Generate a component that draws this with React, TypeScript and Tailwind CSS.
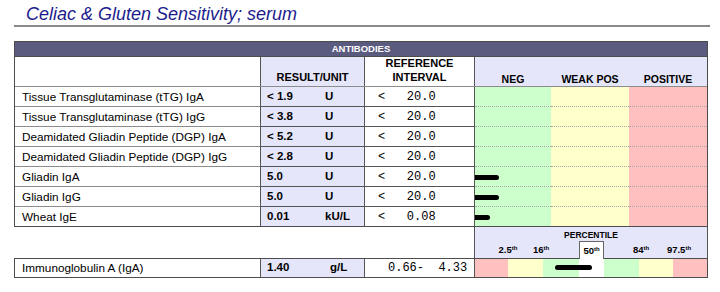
import React from "react";

type Row = { name: string; value: string; unit: string; ref: string; bar?: number };

const rows: Row[] = [
  { name: "Tissue Transglutaminase (tTG) IgA", value: "< 1.9", unit: "U", ref: "<   20.0" },
  { name: "Tissue Transglutaminase (tTG) IgG", value: "< 3.8", unit: "U", ref: "<   20.0" },
  { name: "Deamidated Gliadin Peptide (DGP) IgA", value: "< 5.2", unit: "U", ref: "<   20.0" },
  { name: "Deamidated Gliadin Peptide (DGP) IgG", value: "< 2.8", unit: "U", ref: "<   20.0" },
  { name: "Gliadin IgA", value: "5.0", unit: "U", ref: "<   20.0", bar: 24 },
  { name: "Gliadin IgG", value: "5.0", unit: "U", ref: "<   20.0", bar: 24 },
  { name: "Wheat IgE", value: "0.01", unit: "kU/L", ref: "<   0.08", bar: 15 },
];

function DataRow({ row, last }: { row: Row; last: boolean }) {
  const line = last ? "" : "border-b border-[#8c8c8c]";
  const dots = last ? "" : "border-b border-dotted border-[#a8a8a8]";
  return (
    <div className={"grid grid-cols-[245px_104px_110px_233px] " + (last ? "h-[19px]" : "h-[20px]")}>
      <div className={"flex items-center pl-[7px] text-[11.75px] " + line}>{row.name}</div>
      <div className={"flex items-center pl-[6px] border-l border-[#555] bg-[#e6e6fa] text-[11.5px] font-bold " + line}>
        <span className="w-[58px]">{row.value}</span>
        <span>{row.unit}</span>
      </div>
      <div className={"flex items-center pl-[13px] border-l border-[#555] font-['Liberation_Mono',monospace] text-[12px] whitespace-pre " + line}>
        {row.ref}
      </div>
      <div className="relative grid grid-cols-[76px_78px_78px] border-l border-[#555]">
        <div className={"bg-[#ccffcc] " + dots} />
        <div className={"bg-[#ffffcc] " + dots} />
        <div className={"bg-[#ffc0c0] " + dots} />
        {row.bar ? (
          <div
            className="absolute left-0 top-[8px] h-[5px] bg-black rounded-r-full rounded-l-[2px]"
            style={{ width: row.bar }}
          />
        ) : null}
      </div>
    </div>
  );
}

export default function App() {
  return (
    <div className="w-[720px] h-[292px] bg-white text-black font-['Liberation_Sans',Arial,sans-serif]">
      <div className="pl-[26px] pt-[4px] text-[18px] leading-[21px] italic text-[#1c1c8c]">
        Celiac &amp; Gluten Sensitivity; serum
      </div>
      <div className="ml-[14px] w-[696px] h-[2px] bg-[#8a8a8a]" />

      <div className="ml-[14px] mt-[14px] w-[694px] border border-[#4d4d4d]">
        <div className="h-[15px] bg-[#5b5a7f] border-b border-[#4d4d4d] text-white text-[9.5px] font-bold leading-[14px] text-center">
          ANTIBODIES
        </div>
        <div className="grid grid-cols-[245px_104px_110px_233px] h-[30px] border-b border-[#8c8c8c] text-[11px] font-bold">
          <div />
          <div className="flex items-end justify-center pb-[2px] border-l border-[#555] bg-[#e6e6fa] leading-[13px]">
            RESULT/UNIT
          </div>
          <div className="flex flex-col items-center justify-end pb-[2px] border-l border-[#555] leading-[13.5px]">
            <span>REFERENCE</span>
            <span>INTERVAL</span>
          </div>
          <div className="grid grid-cols-[76px_78px_78px] border-l border-[#555] bg-[#e6e6fa] text-[10.5px] leading-[12px]">
            <div className="flex items-end justify-center pb-[1px]">NEG</div>
            <div className="flex items-end justify-center pb-[1px]">WEAK POS</div>
            <div className="flex items-end justify-center pb-[1px]">POSITIVE</div>
          </div>
        </div>
        {rows.map((r, i) => (
          <DataRow key={r.name} row={r} last={i === rows.length - 1} />
        ))}
      </div>

      <div className="ml-[14px] w-[694px] flex justify-end">
        <div className="relative w-[234px] h-[31px] border-x border-[#555] bg-[#e6e6fa] font-bold">
          <div className="pt-[3px] text-center text-[8.5px] leading-[10px]">PERCENTILE</div>
          <div className="flex mt-[5px] text-[9.5px] leading-[10px]">
            <div className="w-[13px]" />
            <div className="w-[40px] text-center">2.5<sup className="text-[6px]">th</sup></div>
            <div className="w-[26px] text-center">16<sup className="text-[6px]">th</sup></div>
            <div className="w-[76px]" />
            <div className="w-[22px] text-center">84<sup className="text-[6px]">th</sup></div>
            <div className="w-[54px] text-center">97.5<sup className="text-[6px]">th</sup></div>
          </div>
          <div className="absolute z-10 left-[104px] top-[14px] w-[25px] h-[18px] bg-white border-x border-t border-[#666] text-center text-[9.5px] leading-[10px] pt-[4px]">
            50<sup className="text-[6px]">th</sup>
          </div>
        </div>
      </div>

      <div className="ml-[14px] w-[694px] h-[20px] border border-[#4d4d4d] grid grid-cols-[245px_104px_110px_233px]">
        <div className="flex items-center pl-[7px] text-[11.75px]">Immunoglobulin A (IgA)</div>
        <div className="flex items-center pl-[6px] border-l border-[#555] bg-[#e6e6fa] text-[11.5px] font-bold">
          <span className="w-[63px]">1.40</span>
          <span>g/L</span>
        </div>
        <div className="flex items-center pl-[23px] border-l border-[#555] font-['Liberation_Mono',monospace] text-[12px] whitespace-pre">
          0.66-  4.33
        </div>
        <div className="relative grid grid-cols-[33px_35px_36px_25px_35px_34px_34px] border-l border-[#555]">
          <div className="bg-[#ffc0c0]" />
          <div className="bg-[#ffffcc]" />
          <div className="bg-[#ccffcc]" />
          <div className="bg-white" />
          <div className="bg-[#ccffcc]" />
          <div className="bg-[#ffffcc]" />
          <div className="bg-[#ffc0c0]" />
          <div className="absolute left-[80px] top-[6px] w-[37px] h-[5px] bg-black rounded-full" />
        </div>
      </div>
    </div>
  );
}
